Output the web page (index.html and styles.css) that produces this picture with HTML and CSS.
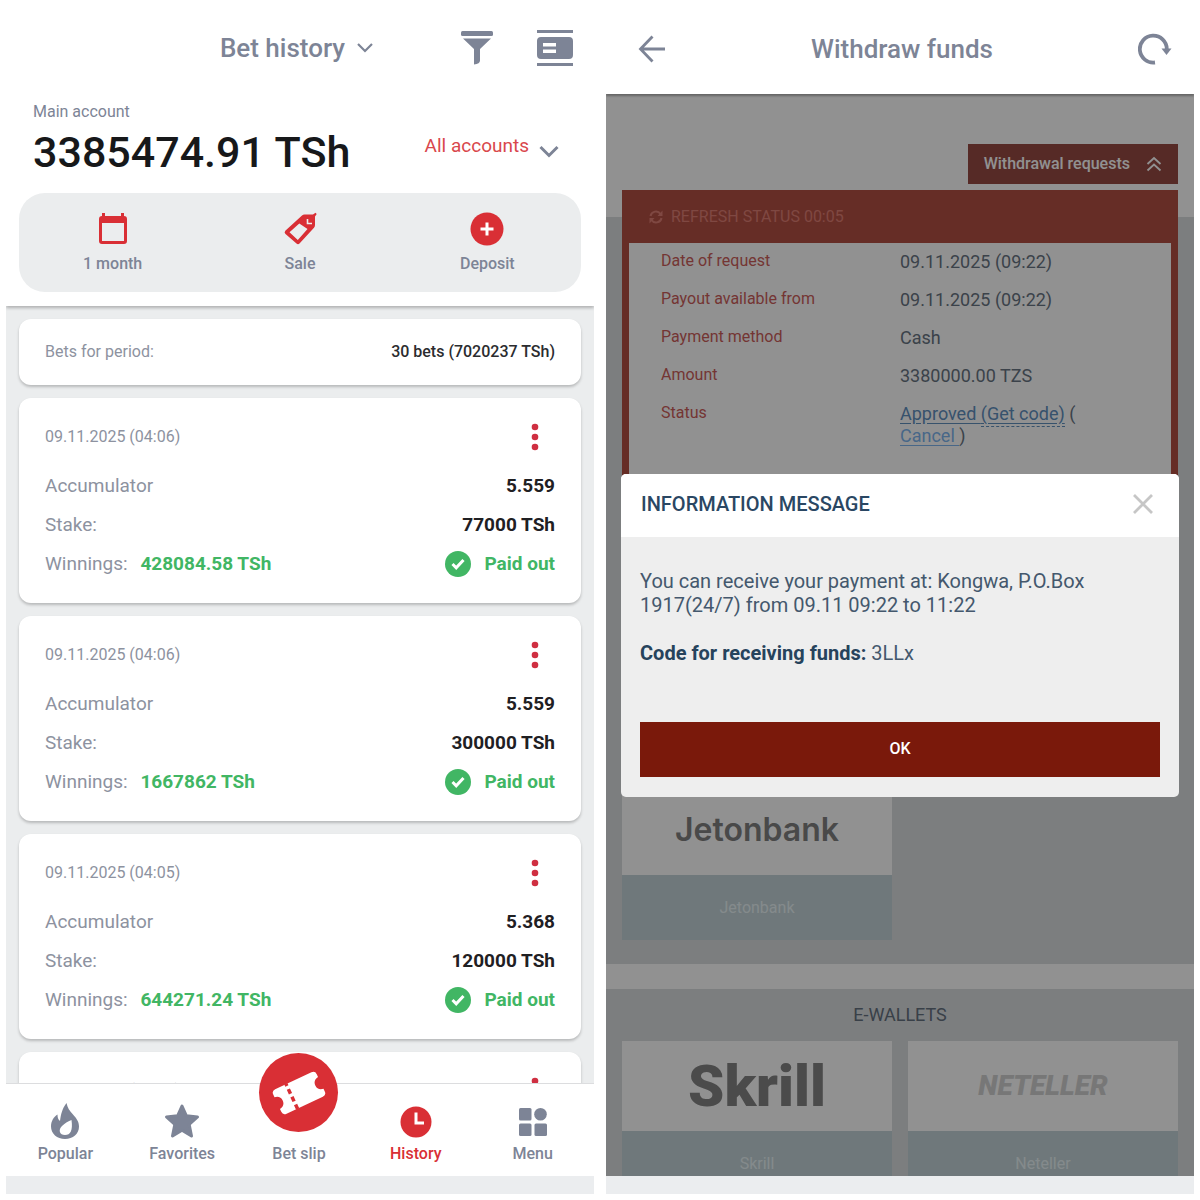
FILE: index.html
```html
<!DOCTYPE html>
<html lang="en">
<head>
<meta charset="utf-8">
<meta name="viewport" content="width=device-width, initial-scale=1">
<title>Bet history and withdrawal</title>
<link rel="stylesheet" href="styles.css">
</head>
<body>
<svg class="sprite" aria-hidden="true">
  <symbol id="check" viewBox="0 0 26 26"><circle cx="13" cy="13" r="13" fill="#41b664"/><path d="M7.500 13l3.700 3.800 7.300-7.800" fill="none" stroke="#fff" stroke-width="3"/></symbol>
  <symbol id="dots" viewBox="0 0 8 28"><circle cx="4" cy="4" r="3.300"/><circle cx="4" cy="14" r="3.300"/><circle cx="4" cy="24" r="3.300"/></symbol>
</svg>

<div class="screens">
  <section class="phone" aria-label="Bet history">
    <header class="account">
      <div class="account-bar">
        <button class="title-button" type="button">Bet history
          <svg width="16" height="10" viewBox="0 0 16 10"><path d="M1 1l7 7 7-7" fill="none" stroke="currentColor" stroke-width="2.200"/></svg>
        </button>
        <div class="bar-actions">
          <button type="button" aria-label="Filter"><svg width="34" height="36" viewBox="0 0 34 36" fill="currentColor"><rect x="1" y="1" width="32" height="5" rx="1.500"/><path d="M3 8.500h28L20 19v11.500q0 3.500-6 4V19z"/></svg></button>
          <button type="button" aria-label="View mode"><svg width="38" height="38" viewBox="0 0 38 38" fill="currentColor"><rect x="1" y="1" width="36" height="3"/><rect x="1" y="34" width="36" height="3"/><path fill-rule="evenodd" d="M5 8h28q4 0 4 4v14q0 4-4 4H5q-4 0-4-4V12q0-4 4-4zM7 14v3.500h13V14zM7 20.500V24h13v-3.500z"/></svg></button>
        </div>
      </div>
      <div class="balance">
        <div>
          <p class="balance-label">Main account</p>
          <p class="balance-sum">3385474.91 TSh</p>
        </div>
        <button class="accounts-button" type="button">All accounts
          <svg width="20" height="14" viewBox="0 0 20 14"><path d="M1.500 3l8.500 8.500L18.500 3" fill="none" stroke="#7d8496" stroke-width="3"/></svg>
        </button>
      </div>
      <div class="shortcuts">
        <button type="button"><svg width="36" height="36" viewBox="0 0 36 36"><path d="M7 4h22q3 0 3 3v22q0 3-3 3H7q-3 0-3-3V7q0-3 3-3zM7 11v18h22V11z" fill="#d92f35" fill-rule="evenodd"/><path d="M8.500 1v5M27.500 1v5" stroke="#d92f35" stroke-width="3"/></svg>1 month</button>
        <button type="button"><svg width="36" height="36" viewBox="0 0 36 36"><path fill="#d92f35" fill-rule="evenodd" d="M20 3.500q1-1 2.500-1H31l2.500-1.700 1.200 1.200L33 4.500V13q0 1.500-1 2.800L17.500 31.500q-1.500 1.500-3 0L3.500 22q-1.700-1.500-.2-3.200zM17.300 11.500L7.500 20.300l8.300 7.600L25.500 17z"/><path d="M25.500 7v4.500H30" fill="none" stroke="#eceeef" stroke-width="1.600"/></svg>Sale</button>
        <button type="button"><svg width="36" height="36" viewBox="0 0 36 36"><circle cx="18" cy="17" r="16.500" fill="#d92f35"/><path d="M18 10.500v13M11.500 17h13" stroke="#fff" stroke-width="3"/></svg>Deposit</button>
      </div>
    </header>

    <main class="bets">
      <div class="card period"><span>Bets for period:</span><strong>30 bets (7020237 TSh)</strong></div>

      <article class="card bet">
        <div class="bet-head"><time>09.11.2025 (04:06)</time><button type="button" aria-label="Bet options"><svg width="8" height="28"><use href="#dots"/></svg></button></div>
        <div class="bet-row"><span>Accumulator</span><b>5.559</b></div>
        <div class="bet-row"><span>Stake:</span><b>77000 TSh</b></div>
        <div class="bet-row"><span>Winnings: <em>428084.58 TSh</em></span><em class="paid"><svg width="26" height="26"><use href="#check"/></svg>Paid out</em></div>
      </article>

      <article class="card bet">
        <div class="bet-head"><time>09.11.2025 (04:06)</time><button type="button" aria-label="Bet options"><svg width="8" height="28"><use href="#dots"/></svg></button></div>
        <div class="bet-row"><span>Accumulator</span><b>5.559</b></div>
        <div class="bet-row"><span>Stake:</span><b>300000 TSh</b></div>
        <div class="bet-row"><span>Winnings: <em>1667862 TSh</em></span><em class="paid"><svg width="26" height="26"><use href="#check"/></svg>Paid out</em></div>
      </article>

      <article class="card bet">
        <div class="bet-head"><time>09.11.2025 (04:05)</time><button type="button" aria-label="Bet options"><svg width="8" height="28"><use href="#dots"/></svg></button></div>
        <div class="bet-row"><span>Accumulator</span><b>5.368</b></div>
        <div class="bet-row"><span>Stake:</span><b>120000 TSh</b></div>
        <div class="bet-row"><span>Winnings: <em>644271.24 TSh</em></span><em class="paid"><svg width="26" height="26"><use href="#check"/></svg>Paid out</em></div>
      </article>

      <article class="card bet">
        <div class="bet-head"><time>09.11.2025 (04:05)</time><button type="button" aria-label="Bet options"><svg width="8" height="28"><use href="#dots"/></svg></button></div>
      </article>
    </main>

    <nav class="tabs">
      <a href="#popular"><svg width="36" height="36" viewBox="0 0 36 36"><path fill="currentColor" fill-rule="evenodd" d="M19.500 0c1 5 3 7.500 6.500 11.500 3.500 4 6 7 6 12C32 31 26 36 18 36S4 30.500 4 23.500c0-5 2.500-9.500 6.500-12 0 3 .5 5 2.500 6.500 1-7 2-12 6.500-18zM24.500 17c-3 1-6.500 3-9.500 6-4 4-2.500 9 3 9s8-4.500 6.500-15z"/></svg>Popular</a>
      <a href="#favorites"><svg width="36" height="36" viewBox="0 0 36 36"><path fill="currentColor" stroke="currentColor" stroke-width="3" stroke-linejoin="round" d="M18 3l4.400 9.800L33.500 14l-8.300 7.500L27.500 33 18 27.200 8.500 33l2.300-11.500L2.500 14l11.100-1.200z"/></svg>Favorites</a>
      <a class="slip" href="#slip"><span class="slip-badge"><svg width="54" height="44" viewBox="0 0 54 44"><g transform="rotate(-25 27 22)"><path fill="#fff" d="M7 8.500h40q4 0 4 4v3q-6 1-6 6.500t6 6.500v3q0 4-4 4H7q-4 0-4-4v-3q6-1 6-6.500t-6-6.500v-3q0-4 4-4z"/><path d="M19 8v28" stroke="#d92f35" stroke-width="3.500" stroke-dasharray="5 3.500" stroke-dashoffset="2.500"/></g></svg></span>Bet slip</a>
      <a class="current" href="#history"><svg width="36" height="36" viewBox="0 0 36 36"><circle cx="18" cy="19" r="15.500" fill="currentColor"/><path d="M18 9.500V20h8" fill="none" stroke="#fff" stroke-width="3"/></svg>History</a>
      <a href="#menu"><svg width="36" height="36" viewBox="0 0 36 36" fill="currentColor"><rect x="4" y="5" width="12.500" height="12.500" rx="1.500"/><circle cx="25.500" cy="11.300" r="6.300"/><rect x="4" y="20.500" width="12.500" height="12.500" rx="1.500"/><rect x="19.500" y="20.500" width="12.500" height="12.500" rx="1.500"/></svg>Menu</a>
    </nav>
    <div class="system-bar"></div>
  </section>

  <section class="phone" aria-label="Withdraw funds">
    <header class="withdraw-bar">
      <button type="button" aria-label="Back"><svg width="28" height="28" viewBox="0 0 28 28"><path d="M14.500 1.500L2.500 14l12 12.500M2.500 14H27" fill="none" stroke="currentColor" stroke-width="2.800"/></svg></button>
      <h1>Withdraw funds</h1>
      <button type="button" aria-label="Reload"><svg width="34" height="34" viewBox="0 0 34 34"><path d="M17 30.500A13.500 13.500 0 1 1 28.800 17" fill="none" stroke="currentColor" stroke-width="3.800"/><path d="M23.500 16.500h10l-5 6.500z" fill="currentColor"/></svg></button>
    </header>

    <div class="stage">
      <div class="withdraw">
        <div class="requests-top">
          <button class="requests-button" type="button">Withdrawal requests
            <svg width="16" height="16" viewBox="0 0 16 16"><path d="M1.500 8L8 2l6.500 6M1.500 14.500L8 8.500l6.500 6" fill="none" stroke="currentColor" stroke-width="1.800"/></svg>
          </button>
        </div>
        <section class="methods">
          <div class="request">
            <button class="refresh" type="button"><svg width="14" height="14" viewBox="0 0 14 14"><path d="M1.500 6a5.500 5.500 0 0 1 10-2M12.500 8a5.500 5.500 0 0 1-10 2" fill="none" stroke="currentColor" stroke-width="2"/><path d="M13.500.5V6H8.500zM.5 13.500V8h5z" fill="currentColor"/></svg>REFRESH STATUS 00:05</button>
            <dl class="details">
              <dt>Date of request</dt><dd>09.11.2025 (09:22)</dd>
              <dt>Payout available from</dt><dd>09.11.2025 (09:22)</dd>
              <dt>Payment method</dt><dd>Cash</dd>
              <dt>Amount</dt><dd>3380000.00 TZS</dd>
              <dt>Status</dt><dd><a class="approved" href="#code">Approved <span>(Get code)</span></a> (<br><a class="cancel" href="#cancel">Cancel </a>)</dd>
            </dl>
          </div>
          <div class="tiles">
            <a class="tile" href="#jetonbank"><span class="logo jeton">Jetonbank</span><span class="tile-name">Jetonbank</span></a>
          </div>
        </section>
        <section class="methods wallets">
          <h2>E-WALLETS</h2>
          <div class="tiles">
            <a class="tile" href="#skrill"><span class="logo skrill">Skrill</span><span class="tile-name">Skrill</span></a>
            <a class="tile" href="#neteller"><span class="logo neteller">NETELLER</span><span class="tile-name">Neteller</span></a>
          </div>
        </section>
      </div>

      <div class="overlay">
        <div class="dialog" role="dialog" aria-labelledby="dialog-title">
          <div class="dialog-head">
            <h2 id="dialog-title">INFORMATION MESSAGE</h2>
            <button type="button" aria-label="Close"><svg width="20" height="20" viewBox="0 0 20 20"><path d="M1 1l18 18M19 1L1 19" stroke="#c6c6c6" stroke-width="2.800"/></svg></button>
          </div>
          <div class="dialog-body">
            <p>You can receive your payment at: Kongwa, P.O.Box 1917(24/7) from 09.11 09:22 to 11:22</p>
            <p><b>Code for receiving funds:</b> 3LLx</p>
            <button class="ok" type="button">OK</button>
          </div>
        </div>
      </div>
    </div>
    <div class="system-bar"></div>
  </section>
</div>
</body>
</html>
```
FILE: styles.css
```css
* { box-sizing: border-box; }

body {
  margin: 0;
  background: #fff;
  color: #7d8496;
  font-family: Roboto, "Liberation Sans", sans-serif;
  font-size: 16px;
  line-height: 20px;
}

h1, h2, p, dl, dd { margin: 0; }

button {
  border: 0;
  padding: 0;
  background: none;
  color: inherit;
  font: inherit;
  cursor: pointer;
}

a { color: inherit; text-decoration: none; }
svg { display: block; flex: none; }
.sprite { position: absolute; width: 0; height: 0; }

.screens {
  display: grid;
  grid-template-columns: 1fr 1fr;
  gap: 12px;
  height: 100vh;
  padding: 6px;
}

.phone {
  display: flex;
  flex-direction: column;
  min-width: 0;
  min-height: 0;
  overflow: hidden;
}

.system-bar { flex: none; height: 18px; background: #ebedef; }

/* Account header */
.account {
  position: relative;
  flex: none;
  padding: 0 13px 14px;
  background: #fff;
  box-shadow: 0 2px 3px rgba(0, 0, 0, .25);
}

.account-bar {
  display: grid;
  grid-template-columns: 1fr auto 1fr;
  align-items: center;
  height: 84px;
  padding-right: 7px;
}

.title-button {
  grid-column: 2;
  display: flex;
  align-items: center;
  gap: 12px;
  font-size: 26px;
  font-weight: 500;
  line-height: 32px;
}

.bar-actions { display: flex; justify-content: flex-end; align-items: center; gap: 42px; }

.balance {
  display: flex;
  justify-content: space-between;
  align-items: center;
  padding: 12px 22px 0 14px;
}

.balance-sum { color: #17181a; font-size: 43px; font-weight: 500; line-height: 60px; }

.accounts-button {
  display: flex;
  align-items: flex-end;
  gap: 10px;
  padding-top: 7px;
  color: #d9474c;
  font-size: 19px;
  line-height: 24px;
}

.shortcuts {
  display: grid;
  grid-template-columns: repeat(3, 1fr);
  height: 99px;
  margin-top: 11px;
  border-radius: 26px;
  background: #ebedee;
}

.shortcuts button {
  display: flex;
  flex-direction: column;
  align-items: center;
  justify-content: center;
  gap: 6px;
  font-weight: 500;
}

/* Bets */
.bets {
  display: flex;
  flex: 1;
  flex-direction: column;
  gap: 13px;
  min-height: 0;
  padding: 13px;
  overflow: hidden;
  background: #ebedee;
}

.card {
  flex: none;
  padding: 0 26px;
  border-radius: 12px;
  background: #fff;
  box-shadow: 0 2px 3px rgba(0, 0, 0, .22);
}

.period { display: flex; justify-content: space-between; align-items: center; height: 66px; color: #8d92a0; }
.period strong { color: #2b2c2f; font-weight: 500; }

.bet { min-height: 205px; padding-top: 19px; padding-bottom: 18px; color: #8d92a0; font-size: 19px; }
.bet-head { display: flex; justify-content: space-between; align-items: center; height: 40px; margin-bottom: 9px; font-size: 16px; }
.bet-head button { padding: 0 16px; color: #cf2f41; }
.bet-head svg { fill: currentColor; }
.bet-row { display: flex; justify-content: space-between; align-items: center; height: 39px; }
.bet-row b { color: #1f2023; font-weight: 700; }
.bet-row em { margin-left: 8px; color: #41b664; font-style: normal; font-weight: 700; }
.bet-row .paid { display: flex; align-items: center; gap: 13px; }

/* Bottom tabs */
.tabs {
  position: relative;
  display: grid;
  grid-template-columns: repeat(5, 1fr);
  flex: none;
  height: 93px;
  padding: 0 3px 0 1px;
  border-top: 1px solid #dcdddf;
  background: #fff;
}

.tabs a {
  display: flex;
  flex-direction: column;
  align-items: center;
  justify-content: flex-end;
  gap: 5px;
  padding-bottom: 12px;
  font-weight: 500;
}

.tabs .current { color: #d92f35; }

.slip-badge {
  position: absolute;
  top: -31px;
  display: flex;
  align-items: center;
  justify-content: center;
  width: 79px;
  height: 79px;
  border-radius: 50%;
  background: #d92f35;
}

/* Withdraw screen */
.withdraw-bar {
  position: relative;
  z-index: 2;
  display: flex;
  flex: none;
  align-items: center;
  justify-content: space-between;
  height: 88px;
  padding: 0 22px 3px 32px;
  background: #fff;
  box-shadow: 0 2px 2px rgba(0, 0, 0, .3);
}

.withdraw-bar h1 { font-size: 26px; font-weight: 500; line-height: 32px; }

.stage { position: relative; flex: 1; min-height: 0; overflow: hidden; }

.requests-top { display: flex; justify-content: flex-end; height: 123px; padding: 50px 16px 0; }

.requests-button {
  display: flex;
  align-items: center;
  gap: 16px;
  height: 40px;
  padding: 0 16px;
  background: #984b44;
  color: #fff;
  font-weight: 500;
}

.methods { padding: 0 16px 24px; background: #dadedf; }
.methods h2 { color: #65717f; font-size: 18px; font-weight: 400; line-height: 52px; text-align: center; }

.request {
  position: relative;
  top: -27px;
  min-height: 543px;
  margin-bottom: 25px;
  padding: 0 7px 7px;
  background: #b44f44;
}

.refresh { display: flex; align-items: center; gap: 8px; height: 53px; padding: 0 20px; color: #e07f74; }

.details {
  display: grid;
  grid-template-columns: 239px 1fr;
  row-gap: 14px;
  min-height: 480px;
  align-content: start;
  padding: 6px 32px;
  background: #fff;
}

.details dt { color: #cd5e5b; line-height: 24px; }
.details dd { padding-top: 2px; color: #697583; font-size: 18px; line-height: 22px; }
.approved { color: #6190bf; text-decoration: underline; text-underline-offset: 3px; }
.approved span { padding-bottom: 2px; border-bottom: 1px dashed #6190bf; }
.cancel { color: #7fb6f0; text-decoration: underline; text-underline-offset: 3px; white-space: pre; }

.tiles { display: grid; grid-template-columns: 1fr 1fr; gap: 16px; }
.tile { display: flex; flex-direction: column; text-align: center; }
.logo { height: 90px; background: #fff; color: #818181; line-height: 90px; }
.jeton { font-family: Inter, sans-serif; font-size: 32px; font-weight: 600; }
.skrill { color: #858585; font-size: 58px; font-weight: 900; }
.neteller { color: #d2d2d2; font-size: 28px; font-style: italic; font-weight: 900; }
.tile-name { height: 65px; background: #c3d3d8; color: #e9f3f6; line-height: 65px; }

.wallets { margin-top: 25px; }

/* Message dialog */
.overlay {
  position: absolute;
  inset: 0;
  display: flex;
  align-items: center;
  padding: 0 15px;
  background: rgba(0, 0, 0, .43);
}

.dialog { width: 100%; overflow: hidden; border-radius: 5px; background: #eee; color: #44586d; font-size: 20px; line-height: 24px; }
.dialog-head { display: flex; align-items: center; justify-content: space-between; height: 63px; padding: 0 26px 3px 20px; background: #fff; }
.dialog-head h2 { color: #2a4763; font-size: 20px; font-weight: 500; }
.dialog-body { padding: 32px 19px 20px; }
.dialog-body p { margin-bottom: 24px; }
.dialog-body b { color: #26435c; }
.ok { display: block; width: 100%; height: 55px; margin-top: 57px; background: #7a190b; color: #fff; font-size: 16px; font-weight: 500; }
```
